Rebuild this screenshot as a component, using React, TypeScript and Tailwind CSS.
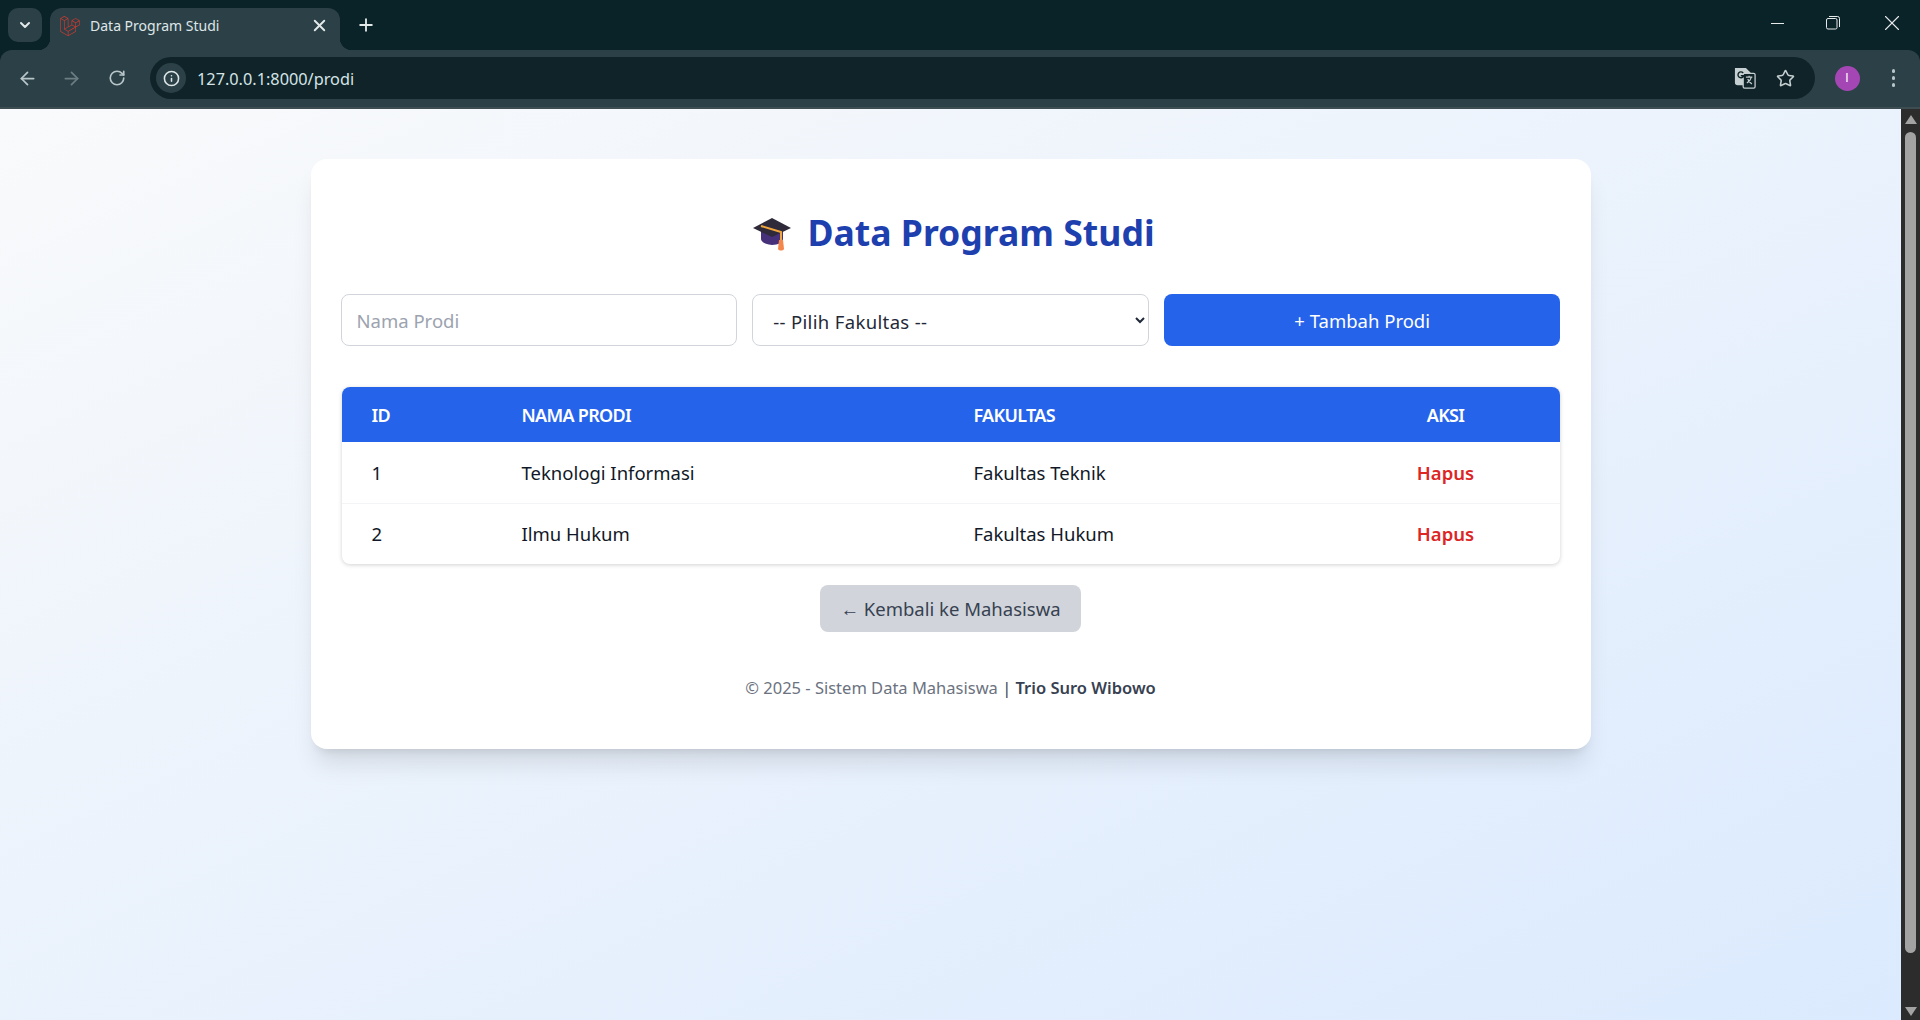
import { ArrowLeft, ArrowRight, ChevronDown, Info, Plus, RotateCw, Star, X } from "lucide-react";
import { SiLaravel } from "react-icons/si";

const prodi = [
  { id: 1, nama: "Teknologi Informasi", fakultas: "Fakultas Teknik" },
  { id: 2, nama: "Ilmu Hukum", fakultas: "Fakultas Hukum" },
];

function GradCap() {
  return (
    <svg width="40" height="36" viewBox="0 0 40 36" className="shrink-0">
      <path d="M9 15v9c0 3 5 6 11 6s11-3 11-6v-9z" fill="#46307a" />
      <path d="M1 13 20 3l19 10-19 9z" fill="#2f2a3a" />
      <path d="M9 11l20 6v9" fill="none" stroke="#f0a63c" strokeWidth="2" />
      <path d="M27 25h4l1 9c-1 2-5 2-6 0z" fill="#f4874b" />
    </svg>
  );
}

function TranslateIcon() {
  return (
    <svg width="22" height="22" viewBox="0 0 24 24" className="text-[#c5ced0]">
      <path d="M1 1h12l5 5v14H4a3 3 0 0 1-3-3z" fill="currentColor" />
      <rect x="10" y="7" width="13" height="16" rx="1.5" fill="#0f2328" stroke="currentColor" strokeWidth="1.4" />
      <path d="M10 6.500a3.200 3.200 0 1 0 .6 3H7.400" fill="none" stroke="#0f2328" strokeWidth="1.5" />
      <path d="M13 11h7M16.500 9.500v1.500M19 11c-.8 3-2.500 5-5 6.500M15 13c.8 2 2.500 4 4.500 5.500" fill="none" stroke="currentColor" strokeWidth="1.3" />
    </svg>
  );
}

function RestoreIcon() {
  return (
    <svg width="14" height="14" viewBox="0 0 14 14" fill="none" stroke="#e6eaeb" strokeWidth="1">
      <rect x="0.500" y="2.500" width="10.500" height="10.500" rx="1.500" />
      <path d="M3 .5h8.500A2 2 0 0 1 13.500 2.500V11" />
    </svg>
  );
}

function BrowserChrome() {
  return (
    <div className="shrink-0 bg-[#0a2329]">
      <div className="flex h-[50px] items-end">
        <div className="mb-2 ml-2 flex h-[34px] w-[34px] items-center justify-center rounded-[10px] bg-[#2c4147]">
          <ChevronDown size={16} strokeWidth={3} className="text-[#e3e8e9]" />
        </div>
        <div className="relative ml-2 flex h-[42px] w-[290px] items-center rounded-t-xl bg-[#2c4147] pr-[11px] pb-[7px] pl-[10px]">
          <span className="absolute bottom-0 -left-3 h-3 w-3 bg-[radial-gradient(circle_at_0_0,transparent_12px,#2c4147_12.500px)]" />
          <span className="absolute -right-3 bottom-0 h-3 w-3 bg-[radial-gradient(circle_at_100%_0,transparent_12px,#2c4147_12.500px)]" />
          <SiLaravel size={20} className="shrink-0 text-[#d5392f]" />
          <span className="ml-[10px] flex-1 text-[14px] text-[#dfe6e8]">Data Program Studi</span>
          <X size={19} strokeWidth={2.4} className="text-[#e3e8e9]" />
        </div>
        <div className="mb-[8px] ml-[9px] flex h-[34px] w-[34px] items-center justify-center">
          <Plus size={20} strokeWidth={2.2} className="text-[#e3e8e9]" />
        </div>
        <div className="mb-[19px] ml-auto flex h-4 items-center pr-[15px]">
          <span className="h-[1px] w-[13px] bg-[#e6eaeb]" />
          <span className="ml-[42px]">
            <RestoreIcon />
          </span>
          <X size={26} strokeWidth={1} className="ml-[39px] text-[#e6eaeb]" />
        </div>
      </div>
      <div className="flex h-[59px] items-center rounded-t-xl border-b-2 border-[#3d4d51] bg-[#2c4147] pb-[1px]">
        <div className="flex items-center gap-[23px] pl-[17px]">
          <ArrowLeft size={21} strokeWidth={2} className="text-[#b8c6c9]" />
          <ArrowRight size={21} strokeWidth={2} className="text-[#6d7e82]" />
          <RotateCw size={18} strokeWidth={2.2} className="ml-[3px] text-[#b8c6c9]" />
        </div>
        <div className="ml-[24px] flex h-[42px] flex-1 items-center rounded-full bg-[#0f2328] pr-[20px] pl-[6px]">
          <div className="flex h-[30px] w-[30px] items-center justify-center rounded-full bg-[#2c4147]">
            <Info size={17} strokeWidth={2.2} className="text-[#dfe6e8]" />
          </div>
          <span className="ml-[11px] flex-1 pt-[2px] text-[16.300px] text-[#d5e3e6]">127.0.0.1:8000/prodi</span>
          <TranslateIcon />
          <Star size={19} strokeWidth={2} className="ml-[20px] text-[#c5ced0]" />
        </div>
        <div className="ml-[20px] flex h-[25px] w-[25px] items-center justify-center rounded-full bg-[#a546b5] font-['Liberation_Sans',sans-serif] text-[12px] text-white">
          I
        </div>
        <div className="mr-[25px] ml-[32px] flex flex-col gap-[3.500px]">
          <span className="h-[3.500px] w-[3.500px] rounded-full bg-[#b8c6c9]" />
          <span className="h-[3.500px] w-[3.500px] rounded-full bg-[#b8c6c9]" />
          <span className="h-[3.500px] w-[3.500px] rounded-full bg-[#b8c6c9]" />
        </div>
      </div>
    </div>
  );
}

function Scrollbar() {
  return (
    <div className="flex w-[19px] shrink-0 flex-col items-center bg-[#2c2c2c] pt-[6px] pb-[4px]">
      <span className="h-0 w-0 border-x-[6.500px] border-b-[9px] border-x-transparent border-b-[#a3a3a3]" />
      <span className="mt-[8px] h-[821px] w-[11px] rounded-full bg-[#a3a3a3]" />
      <span className="mt-auto h-0 w-0 border-x-[6.500px] border-t-[9px] border-x-transparent border-t-[#a3a3a3]" />
    </div>
  );
}

export default function App() {
  return (
    <div className="flex h-[1020px] w-[1920px] flex-col overflow-hidden font-['Noto_Sans',sans-serif]">
      <BrowserChrome />
      <div className="flex min-h-0 flex-1">
        <main className="flex-1 bg-linear-to-br/srgb from-[#f9fafb] to-[#dbeafe] pt-[50px]">
          <div className="mx-auto w-[1280px] rounded-2xl bg-white px-[30px] pt-[40px] pb-[49px] shadow-xl">
            <h1 className="mt-[2px] flex h-[64px] items-center justify-center gap-[15px] pl-[6px] text-[35.600px] font-bold text-[#1e40af]">
              <GradCap />
              Data Program Studi
            </h1>

            <div className="mt-[29px] grid grid-cols-3 gap-[15px]">
              <input
                type="text"
                placeholder="Nama Prodi"
                className="h-[52px] rounded-lg border border-[#d1d5db] bg-white px-[15px] pt-[1px] text-[18.500px] placeholder:text-[#9ca3af]"
              />
              <select className="h-[52px] rounded-lg border border-[#d1d5db] bg-white px-4 pt-[2px] text-[18.500px] tracking-[0.35px] text-[#1f2937]">
                <option>-- Pilih Fakultas --</option>
              </select>
              <button className="h-[52px] rounded-lg bg-[#2563eb] pt-[1px] text-[18.500px] text-white">+ Tambah Prodi</button>
            </div>

            <div className="mx-[1px] mt-[41px] overflow-hidden rounded-lg bg-white shadow-[0_1px_4px_rgba(0,0,0,0.18)]">
              <table className="w-full table-fixed border-collapse text-left text-[18.500px] text-[#111827]">
                <colgroup>
                  <col className="w-[150px]" />
                  <col className="w-[452px]" />
                  <col className="w-[388px]" />
                  <col />
                </colgroup>
                <thead className="bg-[#2563eb] text-[18px] tracking-[-0.7px] text-white">
                  <tr className="h-[55px]">
                    <th className="pt-[1px] pl-[30px] font-semibold">ID</th>
                    <th className="pt-[1px] pl-[30px] font-semibold">NAMA PRODI</th>
                    <th className="pt-[1px] pl-[30px] font-semibold">FAKULTAS</th>
                    <th className="pt-[1px] text-center font-semibold">AKSI</th>
                  </tr>
                </thead>
                <tbody>
                  {prodi.map((row) => (
                    <tr key={row.id} className="h-[61px] border-b border-[#f3f4f6] last:border-b-0">
                      <td className="pt-[1px] pl-[30px]">{row.id}</td>
                      <td className="pt-[1px] pl-[30px]">{row.nama}</td>
                      <td className="pt-[1px] pl-[30px]">{row.fakultas}</td>
                      <td className="pt-[1px] text-center font-semibold text-[#dc2626]">Hapus</td>
                    </tr>
                  ))}
                </tbody>
              </table>
            </div>

            <div className="mt-[21px] flex justify-center">
              <a className="flex h-[47px] items-center rounded-lg bg-[#d1d5db] px-5 pt-[1px] text-[18.500px] text-[#374151]">
                ← Kembali ke Mahasiswa
              </a>
            </div>

            <p className="mt-[44px] text-center text-[16.500px] leading-[24px] text-[#6b7280]">
              © 2025 - Sistem Data Mahasiswa <span className="text-[#374151]">|</span>{" "}
              <span className="font-semibold text-[#374151]">Trio Suro Wibowo</span>
            </p>
          </div>
        </main>
        <Scrollbar />
      </div>
    </div>
  );
}
